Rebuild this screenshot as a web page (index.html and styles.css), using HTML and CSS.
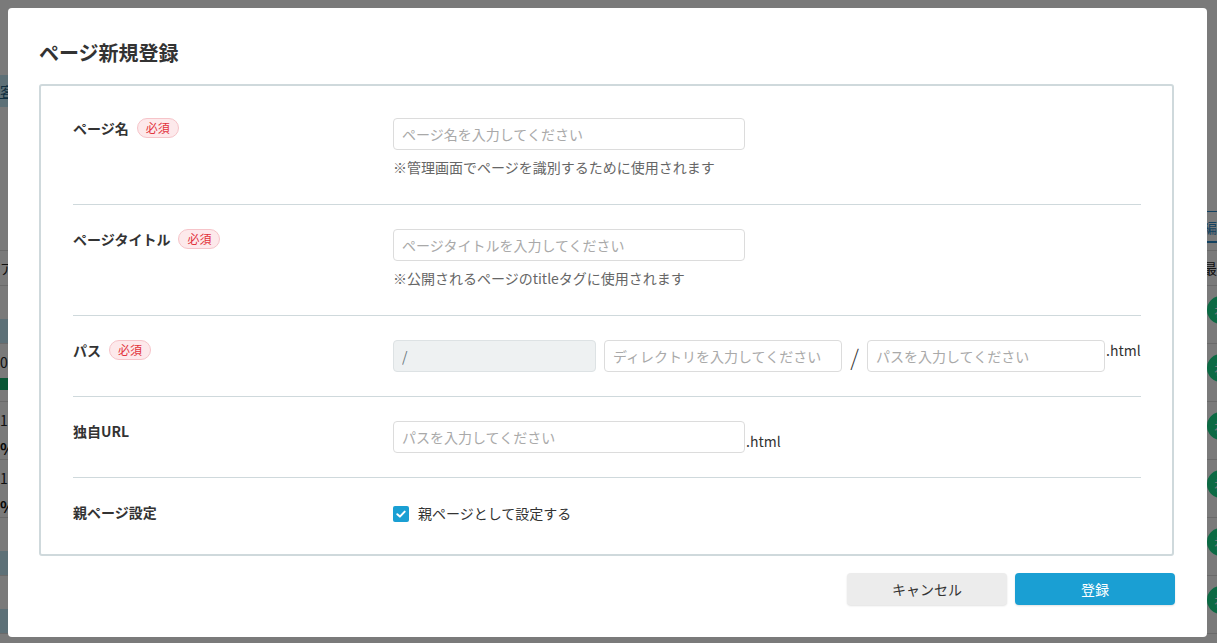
FILE: index.html
```html
<!DOCTYPE html>
<html lang="ja">
<head>
<meta charset="utf-8">
<title>ページ新規登録</title>
<link rel="stylesheet" href="styles.css">
</head>
<body>
<div class="bg-page">
  <div class="bg-row bg-row-top"></div>
  <div class="bg-row bg-row-chip"><span class="bg-chip bg-link">客様一覧</span><span></span></div>
  <div class="bg-row bg-row-gap"></div>
  <div class="bg-row bg-row-tabs"><span></span><span class="bg-tab">編</span></div>
  <div class="bg-row bg-row-head"><span class="bg-text">アクセス</span><span class="bg-text bg-text-right">最</span></div>
  <div class="bg-row bg-data"><span class="bg-left"><span class="bg-chip small">〉</span></span><span class="bg-avatar">初</span></div>
  <div class="bg-row bg-data"><span class="bg-left"><span class="bg-text">0</span><span class="bg-green"></span></span><span class="bg-avatar">初</span></div>
  <div class="bg-row bg-data"><span class="bg-left"><span class="bg-text">1.0</span><span class="bg-icon">%</span></span><span class="bg-avatar">初</span></div>
  <div class="bg-row bg-data"><span class="bg-left"><span class="bg-text">1.0</span><span class="bg-icon">%</span></span><span class="bg-avatar">初</span></div>
  <div class="bg-row bg-data"><span class="bg-left"><span class="bg-chip small">ø</span></span><span class="bg-avatar">初</span></div>
  <div class="bg-row bg-data"><span class="bg-left"><span class="bg-chip small">ø</span></span><span class="bg-avatar">初</span></div>
</div>
<div class="overlay"></div>

<div class="modal">
  <h1 class="modal-title">ページ新規登録</h1>
  <div class="form-box">
    <div class="row">
      <div class="label">ページ名<span class="badge">必須</span></div>
      <div class="field">
        <input class="input w-full" type="text" placeholder="ページ名を入力してください">
        <p class="hint">※管理画面でページを識別するために使用されます</p>
      </div>
    </div>
    <div class="row">
      <div class="label">ページタイトル<span class="badge">必須</span></div>
      <div class="field">
        <input class="input w-full" type="text" placeholder="ページタイトルを入力してください">
        <p class="hint">※公開されるページのtitleタグに使用されます</p>
      </div>
    </div>
    <div class="row">
      <div class="label">パス<span class="badge">必須</span></div>
      <div class="field field-inline">
        <input class="input input-disabled w-root" type="text" value="/" disabled>
        <input class="input w-part" type="text" placeholder="ディレクトリを入力してください">
        <span class="slash">/</span>
        <input class="input w-part" type="text" placeholder="パスを入力してください">
        <span class="ext ext-top">.html</span>
      </div>
    </div>
    <div class="row">
      <div class="label">独自URL</div>
      <div class="field field-inline">
        <input class="input w-full" type="text" placeholder="パスを入力してください">
        <span class="ext ext-bottom">.html</span>
      </div>
    </div>
    <div class="row row-last">
      <div class="label">親ページ設定</div>
      <div class="field">
        <label class="check">
          <span class="check-box"><svg width="12" height="12" viewBox="0 0 12 12"><path d="M2.3 6.2 L4.9 8.6 L9.7 3.6" fill="none" stroke="#fff" stroke-width="2" stroke-linecap="round" stroke-linejoin="round"/></svg></span>
          <span class="check-text">親ページとして設定する</span>
        </label>
      </div>
    </div>
  </div>
  <div class="actions">
    <button class="btn btn-cancel" type="button">キャンセル</button>
    <button class="btn btn-primary" type="button">登録</button>
  </div>
</div>
</body>
</html>
```

FILE: styles.css
```css
* { box-sizing: border-box; }

html, body {
  margin: 0;
  padding: 0;
  width: 1217px;
  height: 643px;
  overflow: hidden;
  font-family: "Noto Sans CJK JP", "Noto Sans", sans-serif;
  color: #333;
}

/* ---------- background page (dimmed) ---------- */
.bg-page {
  width: 1217px;
  height: 643px;
  background: #fff;
  display: flex;
  flex-direction: column;
  overflow: hidden;
}
.bg-row {
  display: flex;
  justify-content: space-between;
  align-items: center;
  flex: none;
}
.bg-row-top { height: 75px; }
.bg-row-chip { height: 32px; }
.bg-row-gap { height: 104px; }
.bg-row-tabs { height: 40px; align-items: flex-start; border-bottom: 1px solid #ddd; }
.bg-row-head { height: 35px; border-bottom: 1px solid #ddd; font-size: 14px; }
.bg-data { height: 58px; border-bottom: 1px solid #ddd; align-items: flex-start; }

.bg-chip {
  display: block;
  width: 80px;
  height: 32px;
  background: #c2eaf8;
  color: #1d5f85;
  font-size: 14px;
  line-height: 32px;
  white-space: nowrap;
}
.bg-link { text-decoration: underline; }
.bg-chip.small { height: 24px; line-height: 24px; margin-top: 25px; width: 30px; border-radius: 0 4px 4px 0; text-align: right; padding-right: 6px; }
.bg-text { font-size: 14px; color: #222; white-space: nowrap; }
.bg-text-right { width: 22px; text-align: right; }
.bg-left { display: flex; flex-direction: column; align-items: flex-start; gap: 6px; padding-top: 8px; }
.bg-green { display: block; width: 30px; height: 12px; background: #12b570; }
.bg-icon { font-size: 16px; font-weight: bold; color: #111; }
.bg-tab {
  width: 24px;
  height: 32px;
  border: 1px solid #2a8ac8;
  border-right: none;
  border-bottom: 2px solid #2a8ac8;
  color: #2a8ac8;
  font-size: 14px;
  line-height: 30px;
  text-align: right;
}
.bg-avatar {
  display: flex;
  align-items: center;
  justify-content: center;
  width: 28px;
  height: 28px;
  border-radius: 50%;
  background: #19dd8e;
  color: #fff;
  font-size: 13px;
  margin-top: 10px;
  margin-right: -18px;
  flex: none;
}

.overlay {
  position: fixed;
  inset: 0;
  background: rgba(0, 0, 0, 0.52);
}

/* ---------- modal ---------- */
.modal {
  position: fixed;
  top: 8px;
  left: 8px;
  width: 1199px;
  height: 629px;
  background: #fff;
  border-radius: 4px;
  padding: 31px 32px 32px 31px;
  display: flex;
  flex-direction: column;
}

.modal-title {
  margin: 0 0 17px;
  font-size: 20px;
  line-height: 28px;
  font-weight: bold;
  color: #333;
}

.form-box {
  border: 2px solid #cfd9dc;
  border-radius: 3px;
  padding: 8px 31px 6px 32px;
  margin-right: 1px;
}

.row {
  display: flex;
  padding: 24px 0;
  border-bottom: 1px solid #cfd9dc;
}
.row:first-child { padding-bottom: 26px; }
.row:nth-child(2) { padding-bottom: 26px; }
.row-last { border-bottom: none; }

.label {
  width: 320px;
  flex: none;
  display: flex;
  align-items: center;
  height: 20px;
  font-size: 14px;
  line-height: 20px;
  font-weight: bold;
  color: #333;
}

.badge {
  display: inline-flex;
  align-items: center;
  height: 20px;
  padding: 0 8px;
  margin-left: 8px;
  border: 1px solid #f6c4c9;
  background: #fde9eb;
  color: #e2333c;
  border-radius: 10px;
  font-size: 12px;
  font-weight: normal;
  line-height: 18px;
}

.field { flex: 1; min-width: 0; }
.field-inline { display: flex; }

.input {
  display: block;
  height: 32px;
  border: 1px solid #dcdcdc;
  border-radius: 4px;
  padding: 0 8px;
  font-family: inherit;
  font-size: 14px;
  color: #333;
  background: #fff;
  outline: none;
  flex: none;
}
.input::placeholder { color: #a9a9a9; }
.w-full { width: 352px; }
.w-root { width: 203px; margin-right: 8px; }
.w-part { width: 238px; }
.input-disabled { background: #eef1f2; color: #6d7a80; border-color: #dde2e4; }

.slash {
  width: 25px;
  flex: none;
  text-align: center;
  font-size: 22px;
  font-weight: 300;
  line-height: 32px;
  color: #333;
}

.ext {
  font-size: 14px;
  line-height: 20px;
  color: #333;
  margin-left: 1px;
}
.ext-top { align-self: flex-start; }
.ext-bottom { align-self: flex-end; margin-bottom: 2px; }

.hint {
  margin: 6px 0 0;
  font-size: 14px;
  line-height: 22px;
  color: #666;
}

.check {
  display: flex;
  align-items: center;
  height: 22px;
}
.check-box {
  width: 16px;
  height: 16px;
  border-radius: 2px;
  background: #1a9fd3;
  display: flex;
  align-items: center;
  justify-content: center;
  margin-right: 9px;
  margin-top: 1px;
}
.check-text { font-size: 14px; line-height: 20px; color: #333; }

/* ---------- actions ---------- */
.actions {
  display: flex;
  justify-content: flex-end;
  gap: 8px;
  margin-top: 17px;
}
.btn {
  width: 160px;
  height: 32px;
  border: none;
  border-radius: 4px;
  font-family: inherit;
  font-size: 14px;
  cursor: pointer;
}
.btn-cancel {
  background: #ececec;
  color: #333;
  box-shadow: 0 1px 2px rgba(0, 0, 0, 0.12);
}
.btn-primary {
  background: #1a9fd3;
  color: #fff;
  box-shadow: 0 1px 2px rgba(0, 0, 0, 0.12);
}
```
